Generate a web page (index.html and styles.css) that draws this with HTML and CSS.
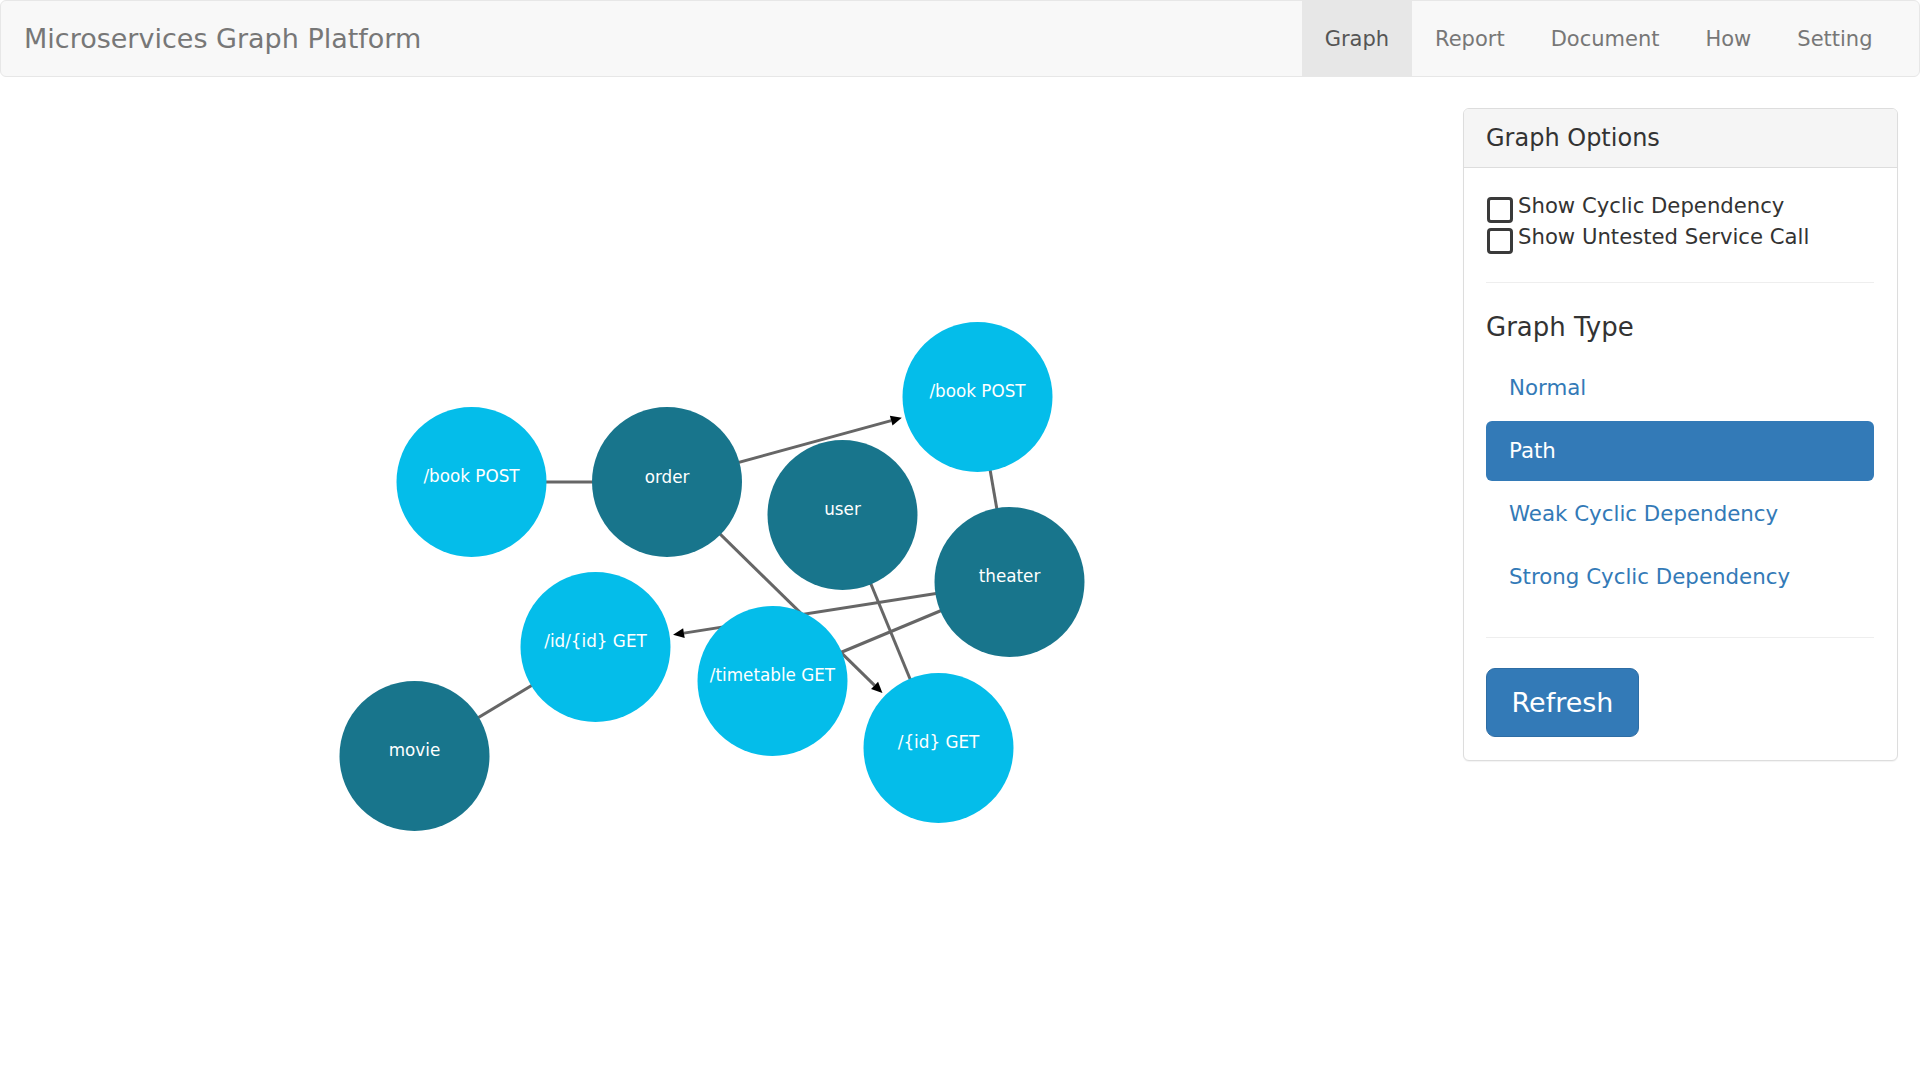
FILE: index.html
```html
<!DOCTYPE html>
<html lang="en">
<head>
<meta charset="utf-8">
<title>Microservices Graph Platform</title>
<link rel="stylesheet" href="styles.css">
</head>
<body>
<nav class="navbar">
  <a class="brand" href="#">Microservices Graph Platform</a>
  <ul class="nav">
    <li class="active"><a href="#">Graph</a></li>
    <li><a href="#">Report</a></li>
    <li><a href="#">Document</a></li>
    <li><a href="#">How</a></li>
    <li><a href="#">Setting</a></li>
  </ul>
</nav>
<main class="main">
  <section class="graph">
    <svg class="graph-svg" width="1395" height="760" viewBox="22.5 108 1395 760" xmlns="http://www.w3.org/2000/svg">
      <g class="edges">
        <line x1="471" y1="482" x2="666.5" y2="482"/>
        <line x1="666.5" y1="482" x2="890.68" y2="420.63"/>
        <line x1="666.5" y1="482" x2="874.07" y2="685.36"/>
        <line x1="977" y1="397" x2="1009" y2="582"/>
        <line x1="1009" y1="582" x2="683.42" y2="633.11"/>
        <line x1="1009" y1="582" x2="772" y2="681"/>
        <line x1="842" y1="515" x2="938" y2="748"/>
        <line x1="414" y1="756" x2="595" y2="647"/>
      </g>
      <g class="arrows">
        <polygon points="901.29,417.73 892.00,425.45 889.36,415.81"/>
        <polygon points="881.93,693.06 870.57,688.93 877.57,681.79"/>
        <polygon points="672.55,634.82 682.64,628.17 684.20,638.05"/>
      </g>
      <g class="nodes">
        <circle class="endpoint" cx="471" cy="482" r="75"/>
        <circle class="service" cx="666.5" cy="482" r="75"/>
        <circle class="endpoint" cx="977" cy="397" r="75"/>
        <circle class="service" cx="842" cy="515" r="75"/>
        <circle class="service" cx="1009" cy="582" r="75"/>
        <circle class="endpoint" cx="595" cy="647" r="75"/>
        <circle class="endpoint" cx="772" cy="681" r="75"/>
        <circle class="endpoint" cx="938" cy="748" r="75"/>
        <circle class="service" cx="414" cy="756" r="75"/>
      </g>
      <g class="labels">
        <text x="471" y="482">/book POST</text>
        <text x="666.5" y="482.5">order</text>
        <text x="977" y="397">/book POST</text>
        <text x="842" y="515">user</text>
        <text x="1009" y="582">theater</text>
        <text x="595" y="647">/id/{id} GET</text>
        <text x="772" y="681">/timetable GET</text>
        <text x="938" y="748">/{id} GET</text>
        <text x="414" y="756">movie</text>
      </g>
    </svg>
  </section>
  <aside class="side">
    <div class="panel">
      <div class="panel-heading">
        <h3 class="panel-title">Graph Options</h3>
      </div>
      <div class="panel-body">
        <label class="check"><input type="checkbox">Show Cyclic Dependency</label>
        <label class="check"><input type="checkbox">Show Untested Service Call</label>
        <hr class="divider">
        <h4 class="section-title">Graph Type</h4>
        <ul class="pills">
          <li><a href="#">Normal</a></li>
          <li class="active"><a href="#">Path</a></li>
          <li><a href="#">Weak Cyclic Dependency</a></li>
          <li><a href="#">Strong Cyclic Dependency</a></li>
        </ul>
        <hr class="divider">
        <button class="btn-refresh" type="button">Refresh</button>
      </div>
    </div>
  </aside>
</main>
</body>
</html>
```

FILE: styles.css
```css
* {
  box-sizing: border-box;
}

html, body {
  margin: 0;
  padding: 0;
  background: #ffffff;
}

body {
  font-family: "DejaVu Sans", sans-serif;
  font-size: 21px;
  line-height: 30px;
  color: #333333;
}

a {
  text-decoration: none;
}

/* Navbar */
.navbar {
  display: flex;
  justify-content: space-between;
  align-items: stretch;
  height: 77px;
  margin-bottom: 31px;
  padding: 0 23.5px 0 0;
  background: #f8f8f8;
  border: 1px solid #e7e7e7;
  border-radius: 6px;
}

.brand {
  display: block;
  padding: 22.5px 23px;
  font-size: 27px;
  line-height: 30px;
  color: #777777;
}

.nav {
  display: flex;
  margin: 0;
  padding: 0;
  list-style: none;
}

.nav li a {
  display: block;
  padding: 22.5px 23px;
  font-size: 21px;
  line-height: 30px;
  color: #777777;
}

.nav li.active a {
  background: #e7e7e7;
  color: #555555;
}

/* Layout */
.main {
  display: grid;
  grid-template-columns: 1fr 435px;
  column-gap: 45px;
  padding: 0 22.5px;
  align-items: start;
}

.graph-svg {
  display: block;
}

.edges line {
  stroke: #666666;
  stroke-width: 3px;
}

.arrows polygon {
  fill: #000000;
}

.endpoint {
  fill: #04bdea;
}

.service {
  fill: #18758c;
}

.labels text {
  fill: #ffffff;
  font-family: "DejaVu Sans", sans-serif;
  font-size: 16.8px;
  text-anchor: middle;
}

/* Panel */
.panel {
  background: #ffffff;
  border: 1px solid #dddddd;
  border-radius: 6px;
  box-shadow: 0 1px 1px rgba(0, 0, 0, 0.05);
}

.panel-heading {
  padding: 15.5px 22.5px 16px;
  background: #f5f5f5;
  border-bottom: 1px solid #dddddd;
  border-radius: 5px 5px 0 0;
}

.panel-title {
  margin: 0;
  font-size: 24px;
  font-weight: normal;
  line-height: 26.4px;
  color: #333333;
}

.panel-body {
  padding: 22.5px 22.5px 23.5px;
}

.check {
  display: flex;
  align-items: flex-start;
  height: 31px;
  font-size: 21.2px;
  line-height: 31px;
  color: #333333;
}

.check input {
  -webkit-appearance: none;
  appearance: none;
  flex: none;
  width: 26px;
  height: 26px;
  margin: 7px 5px 0 1px;
  background: #ffffff;
  border: 3px solid #3a3a3a;
  border-radius: 4px;
}

.divider {
  margin: 30px 0;
  height: 0;
  border: 0;
  border-top: 1px solid #eeeeee;
}

.section-title {
  margin: 0 0 16px;
  font-size: 26px;
  font-weight: normal;
  line-height: 28.6px;
  color: #333333;
}

.pills {
  margin: 0;
  padding: 0;
  list-style: none;
}

.pills li + li {
  margin-top: 3px;
}

.pills li a {
  display: block;
  padding: 15px 23px;
  font-size: 21.35px;
  line-height: 30px;
  color: #337ab7;
  border-radius: 6px;
}

.pills li.active a {
  background: #337ab7;
  color: #ffffff;
}

.btn-refresh {
  display: inline-block;
  padding: 15.5px 24.5px 15px;
  font-family: "DejaVu Sans", sans-serif;
  font-size: 27px;
  line-height: 36px;
  color: #ffffff;
  background: #337ab7;
  border: 1px solid #2e6da4;
  border-radius: 9px;
  cursor: pointer;
}
```
